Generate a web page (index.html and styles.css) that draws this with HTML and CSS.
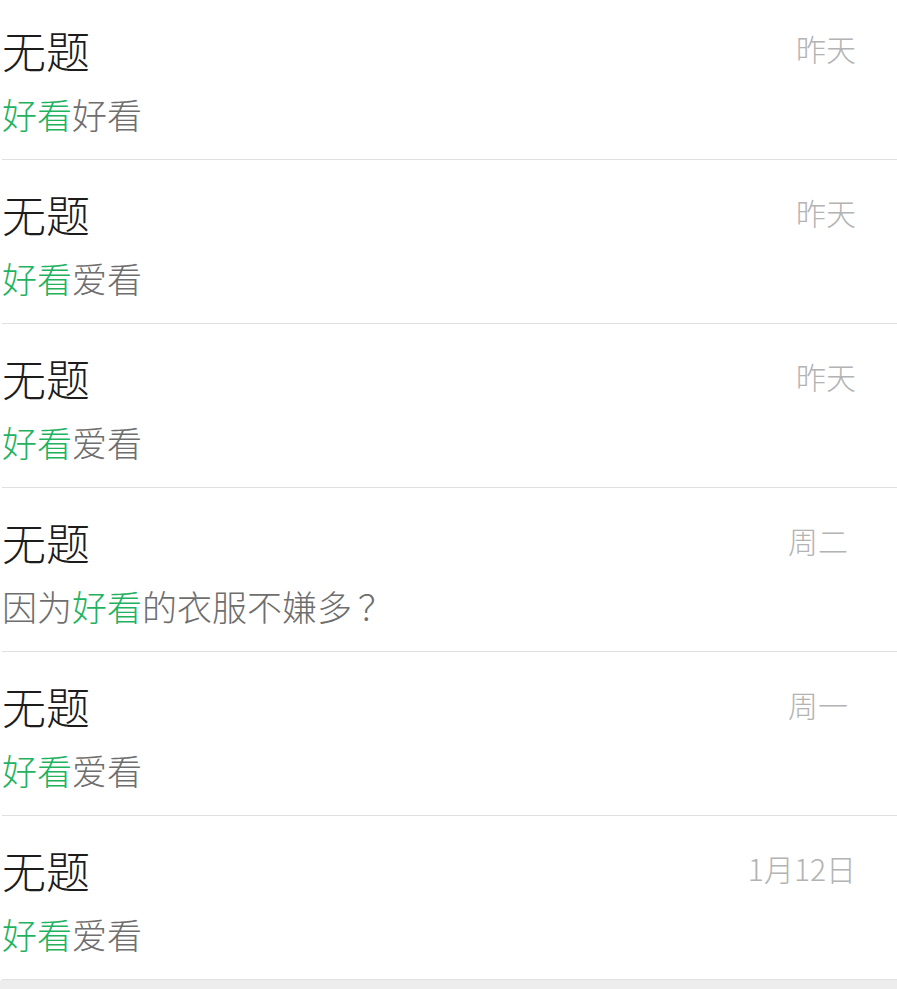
FILE: index.html
```html
<!DOCTYPE html>
<html lang="zh-CN">
<head>
    <meta charset="UTF-8">
    <meta name="viewport" content="width=device-width, initial-scale=1.0">
    <title>收藏</title>
    <link rel="stylesheet" href="styles.css">
</head>
<body>
    <div class="list">
        <div class="item">
            <div class="info">
                <div class="title">无题</div>
                <div class="desc"><span class="hl">好看</span>好看</div>
            </div>
            <div class="date">昨天</div>
        </div>
        <div class="item">
            <div class="info">
                <div class="title">无题</div>
                <div class="desc"><span class="hl">好看</span>爱看</div>
            </div>
            <div class="date">昨天</div>
        </div>
        <div class="item">
            <div class="info">
                <div class="title">无题</div>
                <div class="desc"><span class="hl">好看</span>爱看</div>
            </div>
            <div class="date">昨天</div>
        </div>
        <div class="item">
            <div class="info">
                <div class="title">无题</div>
                <div class="desc">因为<span class="hl">好看</span>的衣服不嫌多<span class="qm">？</span></div>
            </div>
            <div class="date date-short">周二</div>
        </div>
        <div class="item">
            <div class="info">
                <div class="title">无题</div>
                <div class="desc"><span class="hl">好看</span>爱看</div>
            </div>
            <div class="date date-short">周一</div>
        </div>
        <div class="item">
            <div class="info">
                <div class="title">无题</div>
                <div class="desc"><span class="hl">好看</span>爱看</div>
            </div>
            <div class="date">1月12日</div>
        </div>
    </div>
</body>
</html>
```

FILE: styles.css
```css
body {
    margin: 0;
    padding: 0;
    background-color: #ededed;
    font-family: "Noto Sans CJK SC", "Noto Sans", sans-serif;
    font-weight: 300;
    overflow: hidden;
}
.list {
    background: #fff;
    margin-top: -4px;
    padding-left: 2px;
}
.item {
    display: flex;
    justify-content: space-between;
    align-items: flex-start;
    height: 164px;
    box-sizing: border-box;
    padding: 28px 41px 0 0;
    border-bottom: 1px solid #e0e0e0;
}
.title {
    font-size: 44px;
    line-height: 53px;
    color: #1c1c1c;
}
.desc {
    margin-top: 16px;
    font-size: 35px;
    line-height: 42px;
    color: #6e6e6e;
}
.hl {
    color: #1fb35f;
}
.qm {
    margin-left: 6px;
}
.date {
    margin-top: 6px;
    font-size: 30px;
    line-height: 36px;
    color: #b3b3b3;
}
.date-short {
    margin-right: 8px;
}
```
